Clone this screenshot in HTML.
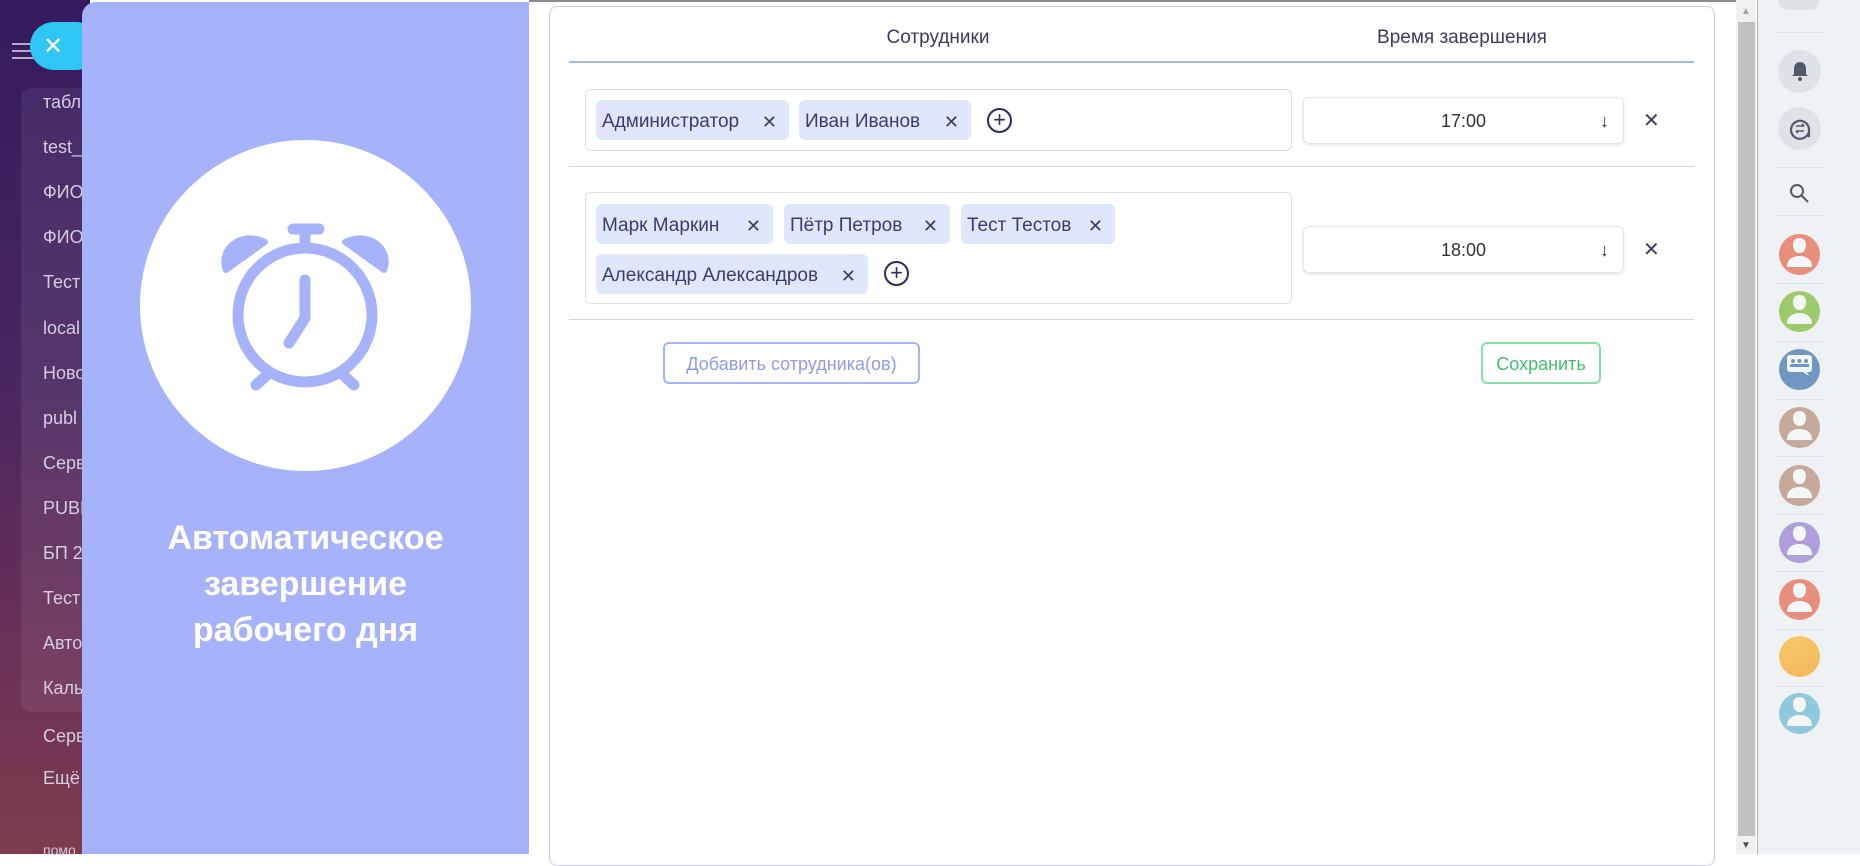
<!DOCTYPE html>
<html><head><meta charset="utf-8"><style>
*{box-sizing:border-box;margin:0;padding:0}
body{width:1860px;height:854px;overflow:hidden;position:relative;font-family:"Liberation Sans",sans-serif;background:#fff}
.abs{position:absolute}
.bg{left:0;top:0;width:90px;height:854px;background:linear-gradient(180deg,#341a5e 0%,#4a2660 45%,#6a3058 75%,#7e3c4c 100%)}
.menu{left:21px;top:88px;width:70px;height:624px;background:rgba(255,255,255,0.07);border-radius:10px}
.mi{left:43px;color:#d6cde0;font-size:18px;white-space:nowrap}
.pill{left:30px;top:22px;width:70px;height:48px;background:#2fc6f6;border-radius:24px}
.left{left:82px;top:2px;width:447px;height:852px;background:#a6b3fb;border-top-left-radius:14px}
.circ{left:140px;top:140px;width:331px;height:331px;border-radius:50%;background:#fff}
.title{left:82px;width:447px;top:515px;text-align:center;color:#fff;font-weight:bold;font-size:34px;line-height:46px}
.card{left:549px;top:6px;width:1166px;height:860px;border:1px solid #c9cdea;border-radius:8px;background:#fff}
.hd{top:27px;font-size:19px;color:#3b3b5c;text-align:center}
.line{height:1px;background:#d2d5ee;left:569px;width:1125px}
.box{left:585px;width:707px;border:1px solid #dedfe8;border-radius:6px}
.chip{height:40px;background:#e0e6fc;border-radius:6px;color:#3b3c6b;font-size:19px;line-height:44px;padding-left:6px;white-space:nowrap}
.chip span{position:absolute;right:12px;top:0;font-size:18px}
.plus{width:25px;height:25px;border:2px solid #2d2d5a;border-radius:50%;color:#2d2d5a;text-align:center;line-height:20px;font-size:22px}
.sel{left:1303px;width:321px;height:47px;border:1px solid #e3e4ec;border-radius:6px;box-shadow:0 1px 3px rgba(0,0,0,0.12);text-align:center;line-height:47px;font-size:18px;color:#333}
.sel b{position:absolute;right:14px;top:0;font-weight:normal;font-size:18px}
.x{left:1643px;font-size:20px;color:#3b3c6b}
.btn{border-radius:6px;font-size:18px;text-align:center}
.side{left:1757px;top:0;width:103px;height:854px;background:#eef2f4;border-left:1px solid #c9a6ae}
.av{left:1779px;width:41px;height:41px;border-radius:50%}
.dv{left:1774px;width:50px;height:1px;background:#dde3e8}
</style></head><body>
<div class="abs bg"></div>
<div class="abs menu"></div>
<div class="abs" style="left:12px;top:43px;width:22px;height:2px;background:#b9a9c9;box-shadow:0 7px 0 #b9a9c9,0 14px 0 #b9a9c9"></div>
<div class="abs pill"><span class="abs" style="left:13px;top:10px;color:#fff;font-size:24px">✕</span></div>
<div class="abs mi" style="top:92px">табл</div>
<div class="abs mi" style="top:137px">test_</div>
<div class="abs mi" style="top:182px">ФИО</div>
<div class="abs mi" style="top:227px">ФИО</div>
<div class="abs mi" style="top:272px">Тест</div>
<div class="abs mi" style="top:318px">local</div>
<div class="abs mi" style="top:363px">Ново</div>
<div class="abs mi" style="top:408px">publ</div>
<div class="abs mi" style="top:453px">Серв</div>
<div class="abs mi" style="top:498px">PUBL</div>
<div class="abs mi" style="top:543px">БП 2</div>
<div class="abs mi" style="top:588px">Тест</div>
<div class="abs mi" style="top:633px">Авто</div>
<div class="abs mi" style="top:678px">Каль</div>
<div class="abs mi" style="top:726px">Серв</div>
<div class="abs mi" style="top:768px">Ещё</div>
<div class="abs mi" style="top:842px;font-size:14px">помо</div>

<div class="abs left"></div>
<div class="abs circ"></div>
<svg class="abs" style="left:140px;top:140px" width="331" height="331" viewBox="140 140 331 331">
<g fill="none" stroke="#a6b3fb" stroke-linecap="round" stroke-width="11">
<circle cx="305" cy="315" r="67"/>
<line x1="305" y1="280" x2="305" y2="318"/>
<line x1="305" y1="318" x2="289" y2="343"/>
<line x1="268" y1="374" x2="256" y2="385"/>
<line x1="342" y1="374" x2="354" y2="385"/>
<line x1="305" y1="236" x2="305" y2="246"/>
<line x1="293" y1="229" x2="319" y2="229"/>
</g>
<path d="M226 270 C218 250 240 230 265 242 Z" fill="#a6b3fb" stroke="#a6b3fb" stroke-width="6" stroke-linejoin="round"/>
<path d="M384 270 C392 250 370 230 345 242 Z" fill="#a6b3fb" stroke="#a6b3fb" stroke-width="6" stroke-linejoin="round"/>
</svg>
<div class="abs title">Автоматическое<br>завершение<br>рабочего дня</div>

<div class="abs" style="left:529px;top:0;width:1208px;height:2px;background:#8a8a95"></div>
<div class="abs card"></div>
<div class="abs hd" style="left:838px;width:200px">Сотрудники</div>
<div class="abs hd" style="left:1332px;width:260px">Время завершения</div>
<div class="abs line" style="top:61px;height:2px;background:#a6b3fb"></div>

<div class="abs box" style="top:89px;height:62px"></div>
<div class="abs chip" style="left:596px;top:100px;width:193px">Администратор<span>✕</span></div>
<div class="abs chip" style="left:799px;top:100px;width:172px">Иван Иванов<span>✕</span></div>
<div class="abs plus" style="left:987px;top:108px">+</div>
<div class="abs sel" style="top:97px">17:00<b>↓</b></div>
<div class="abs x" style="top:108px">✕</div>
<div class="abs line" style="top:166px"></div>

<div class="abs box" style="top:192px;height:112px"></div>
<div class="abs chip" style="left:596px;top:204px;width:177px">Марк Маркин<span>✕</span></div>
<div class="abs chip" style="left:784px;top:204px;width:166px">Пётр Петров<span>✕</span></div>
<div class="abs chip" style="left:961px;top:204px;width:154px">Тест Тестов<span>✕</span></div>
<div class="abs chip" style="left:596px;top:254px;width:272px">Александр Александров<span>✕</span></div>
<div class="abs plus" style="left:884px;top:261px">+</div>
<div class="abs sel" style="top:226px">18:00<b>↓</b></div>
<div class="abs x" style="top:237px">✕</div>
<div class="abs line" style="top:319px"></div>

<div class="abs btn" style="left:663px;top:342px;width:257px;height:42px;border:2px solid #a6b3fb;color:#8e9be6;line-height:40px">Добавить сотрудника(ов)</div>
<div class="abs btn" style="left:1481px;top:342px;width:120px;height:42px;border:2px solid #86e0a8;color:#3fbf6e;line-height:40px">Сохранить</div>

<div class="abs" style="left:1736px;top:0;width:20px;height:854px;background:#f1f1f1"></div>
<div class="abs" style="left:1738px;top:22px;width:17px;height:814px;background:#c1c1c1"></div>
<div class="abs" style="left:1741px;top:6px;color:#a3a3a3;font-size:10px">▲</div>
<div class="abs" style="left:1741px;top:840px;color:#505050;font-size:10px">▼</div>

<div class="abs side"></div>
<div class="abs" style="left:1779px;top:0;width:40px;height:10px;background:#dfe3e8;border-radius:0 0 8px 8px"></div>
<div class="abs dv" style="top:32px"></div>
<div class="abs" style="left:1778px;top:50px;width:43px;height:43px;border-radius:50%;background:#dfe3e8"></div>
<svg class="abs" style="left:1789px;top:60px" width="22" height="22" viewBox="0 0 22 22"><path d="M11 2c-4 0-6 3-6 7v5l-2 2h16l-2-2V9c0-4-2-7-6-7z" fill="#525c69"/><circle cx="11" cy="19" r="2" fill="#525c69"/></svg>
<div class="abs" style="left:1778px;top:107px;width:43px;height:43px;border-radius:50%;background:#dfe3e8"></div>
<svg class="abs" style="left:1788px;top:117px" width="24" height="24" viewBox="0 0 24 24" fill="none" stroke="#525c69" stroke-width="2.2"><path d="M20 17A9 9 0 1 1 21 12v8z"/><path d="M8 9h8M16 9l-2-2M8 14h8M8 14l2 2" stroke-width="1.6"/></svg>
<div class="abs dv" style="top:167px"></div>
<svg class="abs" style="left:1788px;top:182px" width="24" height="24" viewBox="0 0 24 24" fill="none" stroke="#525c69" stroke-width="2"><circle cx="9" cy="9" r="6"/><path d="M13.5 13.5L20 20"/></svg>
<div class="abs dv" style="top:215px"></div>

<div class="abs av" style="top:234px;background:#e88e7c"></div>
<div class="abs av" style="top:291px;background:#9dca6c"></div>
<div class="abs av" style="top:349px;background:#6f97c2"></div>
<div class="abs av" style="top:407px;background:#c6a99a"></div>
<div class="abs av" style="top:465px;background:#c6a99a"></div>
<div class="abs av" style="top:522px;background:#ae9fdc"></div>
<div class="abs av" style="top:579px;background:#e88e7c"></div>
<div class="abs av" style="top:636px;background:linear-gradient(160deg,#f7c96a,#f3b85c)"></div>
<div class="abs av" style="top:693px;background:#8ec9dc"></div>
<div class="abs dv" style="top:283px"></div><div class="abs dv" style="top:341px"></div><div class="abs dv" style="top:399px"></div><div class="abs dv" style="top:456px"></div><div class="abs dv" style="top:514px"></div><div class="abs dv" style="top:571px"></div><div class="abs dv" style="top:629px"></div><div class="abs dv" style="top:686px"></div>
<svg class="abs" style="left:1779px;top:234px" width="41" height="500" viewBox="0 0 41 500" fill="#f4f6f8">
<g id="p"><path d="M14 11c0-5 3-7 6.5-7S27 6 27 11c0 4-2 8-6.5 8S14 15 14 11z"/><path d="M8 33c0-8 6-11 12.5-11S33 25 33 33z"/></g>
<use href="#p" y="57"/><use href="#p" y="173"/><use href="#p" y="231"/><use href="#p" y="288"/><use href="#p" y="345"/><use href="#p" y="459"/>
<path d="M8 124a3 3 0 0 1 3-3h19a3 3 0 0 1 3 3v11a3 3 0 0 1-3 3h-2l2 4-6-4H11a3 3 0 0 1-3-3z"/>
<g fill="#6f97c2"><circle cx="14" cy="127" r="2"/><circle cx="20.5" cy="127" r="2"/><circle cx="27" cy="127" r="2"/><rect x="11" y="130" width="19" height="3"/></g>
</svg>
</body></html>
